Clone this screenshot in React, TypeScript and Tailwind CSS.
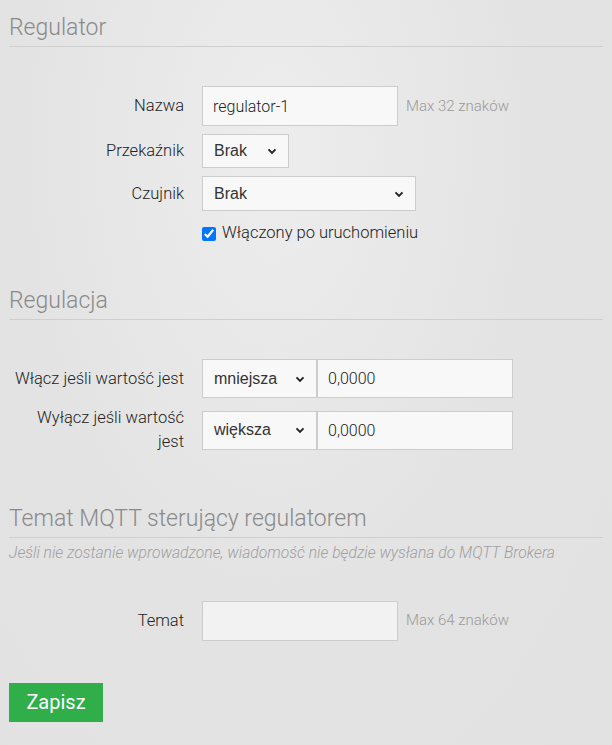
import React from 'react';

const Heading: React.FC<{ title: string; className?: string }> = ({ title, className }) => (
  <h2 className={`text-[23px] font-light leading-[30px] pt-[13px] pb-[3px] text-[#8a8a8a] border-b border-[#cfcfcf] ${className ?? ''}`}>
    {title}
  </h2>
);

const Chevron = () => (
  <svg className="absolute right-[12px] top-1/2 -translate-y-1/2 w-[10px] h-[10px] pointer-events-none" viewBox="0 0 10 10">
    <path d="M1.5 3.3 L5 6.8 L8.5 3.3" fill="none" stroke="#222" strokeWidth="1.9" />
  </svg>
);

const Select: React.FC<{ value: string; w: string; h: string }> = ({ value, w, h }) => (
  <div className={`relative ${w} ${h}`}>
    <select
      defaultValue={value}
      className="appearance-none w-full h-full pl-[11px] bg-[#f8f8f8] border border-[#cccccc] text-[16px] font-normal text-[#333] font-[family-name:'Liberation_Sans',Arial,sans-serif] outline-none"
    >
      <option>{value}</option>
    </select>
    <Chevron />
  </div>
);

const Row: React.FC<{ label: React.ReactNode; children: React.ReactNode }> = ({ label, children }) => (
  <div className="grid grid-cols-[175px_1fr] gap-x-[18px] items-center">
    <label className="text-right text-[16.5px] font-light leading-[24px] text-[#222]">{label}</label>
    <div className="flex items-center">{children}</div>
  </div>
);

const TextInput: React.FC<{ value?: string; w: string; h: string; bg?: string }> = ({ value, w, h, bg }) => (
  <input
    defaultValue={value}
    className={`${w} ${h} px-[10px] border border-[#cccccc] ${bg ?? 'bg-[#f8f8f8]'} text-[16px] font-light text-[#222] outline-none`}
  />
);

const Hint: React.FC<{ text: string }> = ({ text }) => (
  <span className="ml-[8px] text-[15px] font-light text-[#9a9a9a]">{text}</span>
);

export default function App() {
  return (
    <div className="min-h-[745px] w-full px-[9px] bg-[#e4e4e4] bg-[radial-gradient(ellipse_at_45%_20%,#ededed_0%,#e3e3e3_55%,#e2e2e2_100%)] font-[family-name:Roboto,'Liberation_Sans',sans-serif]">
      <Heading title="Regulator" />

      <div className="mt-[39px] flex flex-col gap-[8px]">
        <Row label="Nazwa">
          <TextInput value="regulator-1" w="w-[196px]" h="h-[40px]" />
          <Hint text="Max 32 znaków" />
        </Row>
        <Row label="Przekaźnik">
          <Select value="Brak" w="w-[87px]" h="h-[34px]" />
        </Row>
        <Row label="Czujnik">
          <Select value="Brak" w="w-[214px]" h="h-[35px]" />
        </Row>
        <Row label="">
          <label className="flex items-center gap-[6px] h-[26px] pt-[3px] text-[16.5px] font-light text-[#222]">
            <input type="checkbox" defaultChecked className="w-[14px] h-[14px] m-0 accent-[#0075ff]" />
            Włączony po uruchomieniu
          </label>
        </Row>
      </div>

      <Heading title="Regulacja" className="mt-[28px]" />

      <div className="mt-[39px] flex flex-col gap-[8px]">
        <Row label="Włącz jeśli wartość jest">
          <Select value="mniejsza" w="w-[115px]" h="h-[39px]" />
          <TextInput value="0,0000" w="w-[196px]" h="h-[39px]" />
        </Row>
        <Row label={<>Wyłącz jeśli wartość<br />jest</>}>
          <Select value="większa" w="w-[115px]" h="h-[39px]" />
          <TextInput value="0,0000" w="w-[196px]" h="h-[39px]" />
        </Row>
      </div>

      <Heading title="Temat MQTT sterujący regulatorem" className="mt-[37px]" />
      <p className="mt-[3px] text-[15.7px] font-light italic text-[#a0a0a0]">
        Jeśli nie zostanie wprowadzone, wiadomość nie będzie wysłana do MQTT Brokera
      </p>

      <div className="mt-[36px]">
        <Row label="Temat">
          <TextInput w="w-[196px]" h="h-[40px]" bg="bg-[#f2f2f2]" />
          <Hint text="Max 64 znaków" />
        </Row>
      </div>

      <button className="mt-[42px] w-[94px] h-[39px] bg-[#2fae4a] text-white text-[20px]">Zapisz</button>
    </div>
  );
}
